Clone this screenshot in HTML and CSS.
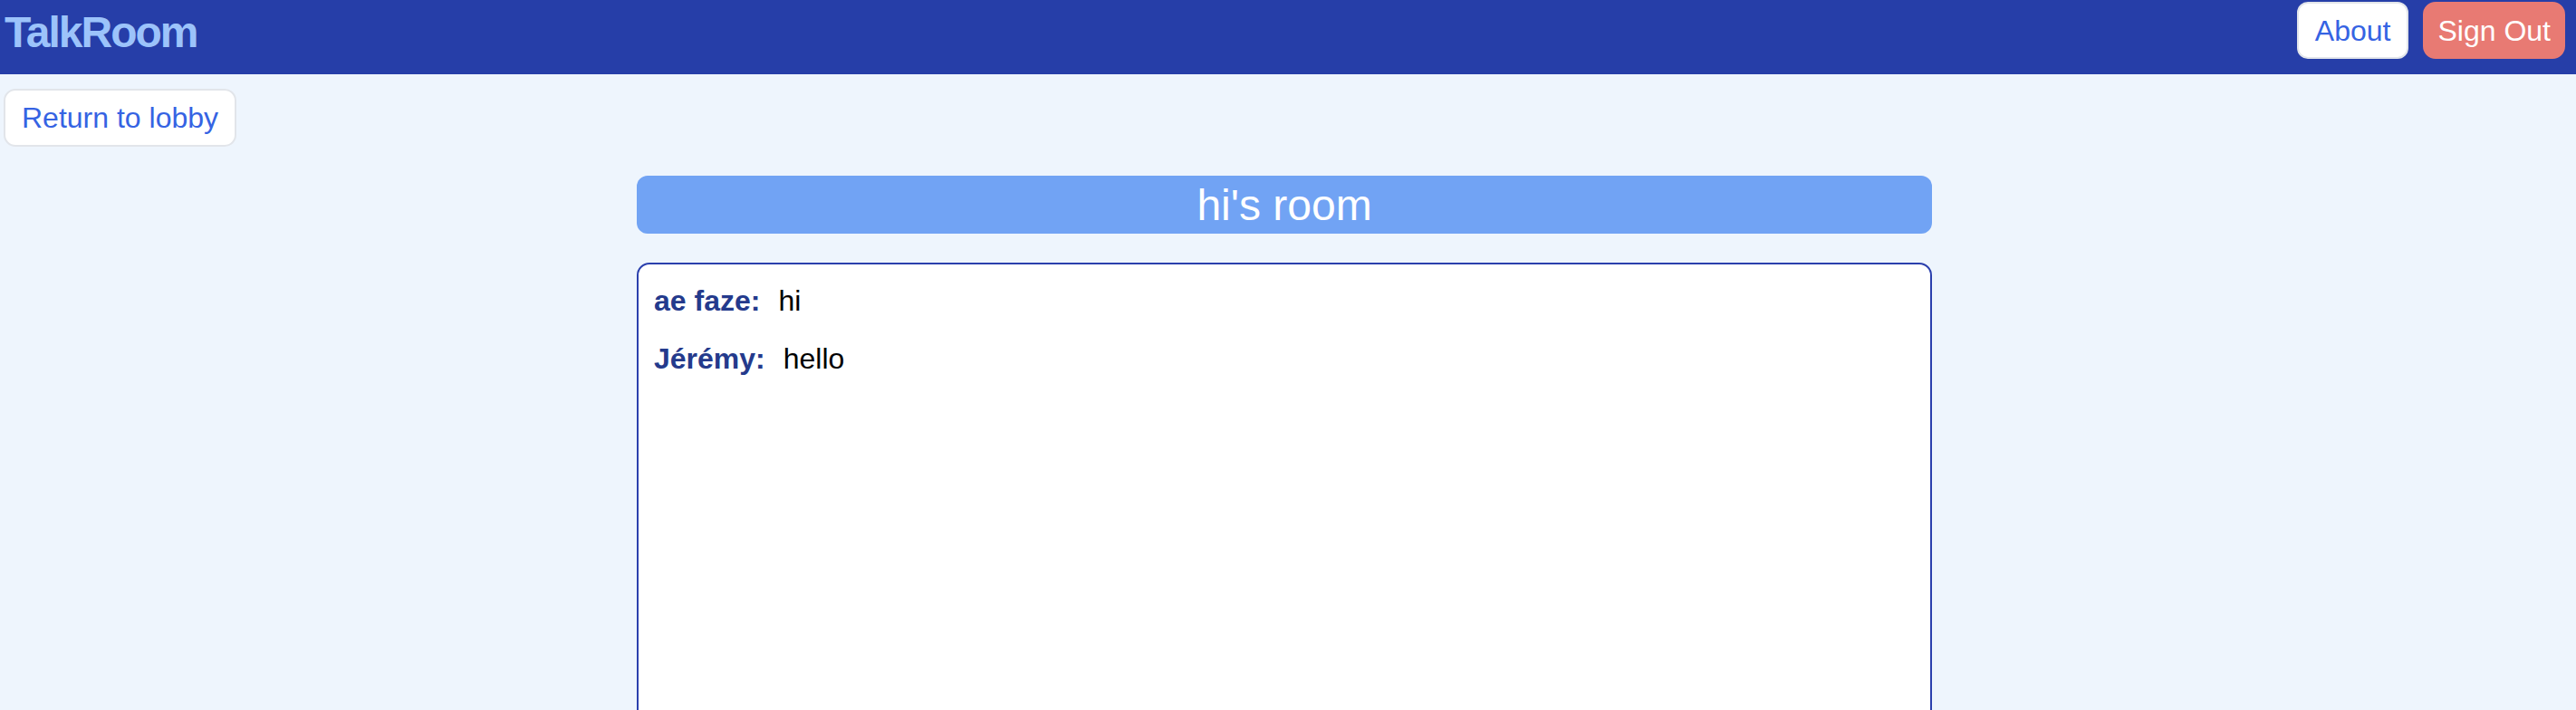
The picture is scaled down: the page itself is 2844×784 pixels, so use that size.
FILE: index.html
```html
<!DOCTYPE html>
<html lang="en">
<head>
<meta charset="utf-8">
<title>TalkRoom</title>
<link rel="stylesheet" href="styles.css">
</head>
<body>
<header class="topbar">
  <div class="logo">TalkRoom</div>
  <nav class="nav">
    <button class="btn btn-light">About</button>
    <button class="btn btn-danger">Sign Out</button>
  </nav>
</header>
<div class="content">
  <div class="toolbar">
    <button class="btn btn-light btn-lobby">Return to lobby</button>
  </div>
  <main class="room">
    <h1 class="room-title">hi's room</h1>
    <section class="chat">
      <p class="msg"><span class="author">ae faze:</span><span class="text">hi</span></p>
      <p class="msg"><span class="author">Jérémy:</span><span class="text">hello</span></p>
    </section>
  </main>
</div>
</body>
</html>
```
FILE: styles.css
```css
html, body {
  margin: 0;
  padding: 0;
  background: #eef5fd;
  overflow: hidden;
}
body {
  font-family: "Liberation Sans", Arial, sans-serif;
  height: 784px;
}
.topbar {
  height: 82px;
  background: #263ea8;
  display: flex;
  justify-content: space-between;
  align-items: flex-start;
  padding: 0 12px 0 5px;
  box-sizing: border-box;
}
.logo {
  font-size: 48px;
  font-weight: 700;
  letter-spacing: -2px;
  color: #9cc3fa;
  line-height: 64px;
  padding-top: 4px;
}
.nav {
  display: flex;
  gap: 16px;
  margin-top: 2px;
}
.btn {
  font-family: inherit;
  font-size: 32px;
  line-height: 48px;
  height: 63px;
  border-radius: 12px;
  border: 2px solid #e2e5ea;
  cursor: pointer;
  margin: 0;
}
.btn-light {
  background: #ffffff;
  color: #3563e3;
  padding: 0 18px;
}
.btn-danger {
  background: #e87a73;
  border-color: #e87a73;
  color: #ffffff;
  padding: 0 14px;
  border-radius: 14px;
}
.content {
  width: 2836px;
}
.toolbar {
  padding: 16px 4px 0 4px;
}
.btn-lobby {
  height: 64px;
  border-radius: 13px;
}
.room {
  width: 1430px;
  margin: 32px auto 0;
}
.room-title {
  margin: 0;
  height: 64px;
  box-sizing: border-box;
  padding-top: 3px;
  line-height: 60px;
  background: #71a3f4;
  border-radius: 12px;
  color: #ffffff;
  font-size: 48px;
  font-weight: 400;
  text-align: center;
}
.chat {
  margin-top: 32px;
  height: 600px;
  background: #ffffff;
  border: 2px solid #2b40ad;
  border-radius: 14px;
  padding: 16px 17px;
  box-sizing: border-box;
  display: flex;
  flex-direction: column;
  gap: 16px;
}
.msg {
  margin: 0;
  font-size: 32px;
  line-height: 48px;
  color: #000000;
}
.author {
  font-weight: 700;
  color: #243a8c;
  margin-right: 20px;
}
```
